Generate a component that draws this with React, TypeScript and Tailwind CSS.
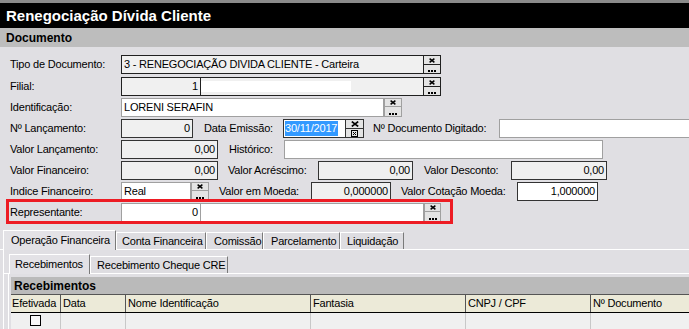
import React from "react";

const XIcon = () => (
  <svg width="6" height="5" viewBox="0 0 6 5">
    <path d="M0.6 0.6 L5.4 4.4 M5.4 0.6 L0.6 4.4" stroke="#000" strokeWidth="1.5" />
  </svg>
);

const Dots = () => (
  <svg width="8" height="2" viewBox="0 0 8 2" shapeRendering="crispEdges">
    <rect x="0" y="0" width="2" height="2" fill="#000" />
    <rect x="3" y="0" width="2" height="2" fill="#000" />
    <rect x="6" y="0" width="2" height="2" fill="#000" />
  </svg>
);

const BigX = () => (
  <svg width="8" height="6" viewBox="0 0 8 6">
    <path d="M0.8 0.6 L7.2 5.4 M7.2 0.6 L0.8 5.4" stroke="#000" strokeWidth="1.7" />
  </svg>
);

const CalIcon = () => (
  <svg width="7" height="7" viewBox="0 0 7 7" shapeRendering="crispEdges">
    <rect x="0.5" y="0.5" width="6" height="6" fill="none" stroke="#000" strokeWidth="1" />
    <rect x="2" y="2" width="1" height="1" fill="#000" />
    <rect x="4" y="2" width="1" height="1" fill="#000" />
    <rect x="3" y="3" width="1" height="1" fill="#000" />
    <rect x="2" y="4" width="1" height="1" fill="#000" />
    <rect x="4" y="4" width="1" height="1" fill="#000" />
  </svg>
);

function DarkBtns() {
  return (
    <div className="w-[17px] h-full flex flex-col border-l border-[#202020] shrink-0">
      <div className="h-[9px] bg-[#e4e4e4] flex items-center justify-center border-b border-[#202020]">
        <XIcon />
      </div>
      <div className="flex-1 bg-[#e4e4e4] flex items-end justify-center pb-[1px]">
        <Dots />
      </div>
    </div>
  );
}

function LightBtns({ w }: { w: string }) {
  return (
    <div className={`${w} h-full flex flex-col border border-[#a0a0a0] shrink-0 bg-[#e4e4e4]`}>
      <div className="h-[8px] flex items-center justify-center border-b border-[#a0a0a0]">
        <XIcon />
      </div>
      <div className="flex-1 flex items-end justify-center pb-[1px]">
        <Dots />
      </div>
    </div>
  );
}

function Label({ children }: { children: React.ReactNode }) {
  return <div className="w-[121px] pl-[10px] shrink-0 whitespace-nowrap">{children}</div>;
}

const grayField =
  "h-full bg-[#f0f0f0] border border-[#333] flex items-center justify-end pr-[2px] shrink-0";
const whiteField = "h-full bg-white border border-[#a0a0a0] flex items-center shrink-0";

function Tab({ children, w, pl, active }: { children: React.ReactNode; w: string; pl: string; active?: boolean }) {
  return (
    <div
      className={`${w} ${pl} ${
        active ? "h-[19px] bg-[#e3e2e6] relative -mb-[1px] h-[20px]" : "h-[17px] bg-[#dedde1]"
      } border-l border-t border-white border-r border-r-[#7a7a7a] flex items-center shrink-0 whitespace-nowrap`}
    >
      {children}
    </div>
  );
}

export default function App() {
  return (
    <div className="w-[689px] h-[329px] overflow-hidden bg-[#e0dfe3] text-black text-[11px] tracking-[-0.2px] font-['Liberation_Sans',Arial,sans-serif] leading-none">
      {/* Title */}
      <div className="h-[28px] border-t-[3px] border-[#8a8a8a] bg-black text-white font-bold text-[15px] tracking-normal pl-[6px] flex items-center">
        Renegociação Dívida Cliente
      </div>
      <div className="h-[19px] bg-[#bdbdbd] font-bold text-[12px] tracking-normal pl-[6px] flex items-center">
        Documento
      </div>

      {/* Form */}
      <div className="relative flex flex-col pt-[8px]">
        {/* Tipo de Documento */}
        <div className="flex items-center h-[19px]">
          <Label>Tipo de Documento:</Label>
          <div className="w-[320px] h-full border border-[#202020] flex shrink-0">
            <div className="flex-1 bg-[#f0f0f0] flex items-center pl-[2px] whitespace-nowrap">
              3 - RENEGOCIAÇÃO DIVIDA CLIENTE - Carteira
            </div>
            <DarkBtns />
          </div>
        </div>

        {/* Filial */}
        <div className="flex items-center h-[19px] mt-[3px]">
          <Label>Filial:</Label>
          <div className="w-[320px] h-full border border-[#202020] flex shrink-0">
            <div className="w-[79px] bg-[#f0f0f0] flex items-center justify-end pr-[2px] border-r border-[#202020]">1</div>
            <div className="flex-1 bg-[#f0f0f0] flex items-center">
              <div className="w-[150px] h-[11px] bg-white"></div>
            </div>
            <DarkBtns />
          </div>
        </div>

        {/* Identificação */}
        <div className="flex items-center h-[19px] mt-[2px]">
          <Label>Identificação:</Label>
          <div className={`${whiteField} w-[263px] pl-[2px]`}>LORENI SERAFIN</div>
          <LightBtns w="w-[18px]" />
        </div>

        {/* Nº Lançamento */}
        <div className="flex items-center h-[19px] mt-[2px]">
          <Label>Nº Lançamento:</Label>
          <div className={`${grayField} w-[72px]`}>0</div>
          <div className="ml-[11px] w-[79px] shrink-0 whitespace-nowrap">Data Emissão:</div>
          <div className="w-[63px] h-full bg-white border border-[#333] flex items-center pl-[1px] py-[1px] shrink-0">
            <div className="h-full bg-[#3399ff] text-white flex items-center pr-[1px]">30/11/2017</div>
          </div>
          <div className="w-[18px] h-full border border-[#333] border-l-0 flex flex-col bg-[#e4e4e4] shrink-0">
            <div className="h-[9px] flex items-center justify-center border-b border-[#333]">
              <BigX />
            </div>
            <div className="flex-1 flex items-center justify-center">
              <CalIcon />
            </div>
          </div>
          <div className="ml-[9px] w-[126px] shrink-0 whitespace-nowrap">Nº Documento Digitado:</div>
          <div className={`${whiteField} w-[200px]`}></div>
        </div>

        {/* Valor Lançamento */}
        <div className="flex items-center h-[19px] mt-[2px]">
          <Label>Valor Lançamento:</Label>
          <div className={`${grayField} w-[97px]`}>0,00</div>
          <div className="ml-[11px] w-[55px] shrink-0 whitespace-nowrap">Histórico:</div>
          <div className={`${whiteField} w-[319px]`}></div>
        </div>

        {/* Valor Financeiro */}
        <div className="flex items-center h-[19px] mt-[2px]">
          <Label>Valor Financeiro:</Label>
          <div className={`${grayField} w-[97px]`}>0,00</div>
          <div className="ml-[10px] w-[90px] shrink-0 whitespace-nowrap">Valor Acréscimo:</div>
          <div className={`${grayField} w-[95px]`}>0,00</div>
          <div className="ml-[11px] w-[87px] shrink-0 whitespace-nowrap">Valor Desconto:</div>
          <div className={`${grayField} w-[96px]`}>0,00</div>
        </div>

        {/* Indice Financeiro */}
        <div className="flex items-center h-[19px] mt-[2px]">
          <Label>Indice Financeiro:</Label>
          <div className={`${whiteField} w-[70px] pl-[2px]`}>Real</div>
          <LightBtns w="w-[18px]" />
          <div className="ml-[10px] w-[92px] shrink-0 whitespace-nowrap">Valor em Moeda:</div>
          <div className={`${grayField} w-[80px]`}>0,000000</div>
          <div className="ml-[10px] w-[116px] shrink-0 whitespace-nowrap">Valor Cotação Moeda:</div>
          <div className="h-full bg-white border border-[#333] flex items-center justify-end pr-[2px] shrink-0 w-[81px]">
            1,000000
          </div>
        </div>

        {/* Representante */}
        <div className="flex items-center h-[19px] mt-[2px]">
          <Label>Representante:</Label>
          <div className={`${whiteField} w-[80px] justify-end pr-[2px]`}>0</div>
          <div className={`${whiteField} w-[223px] border-l-0`}></div>
          <LightBtns w="w-[17px]" />
        </div>

        {/* Red highlight annotation */}
        <div className="absolute left-[6px] top-[152px] w-[447px] h-[25px] border-[3px] border-[#ed1c24] pointer-events-none"></div>
      </div>

      {/* Tabs */}
      <div className="mt-[8px] flex items-end h-[20px] border-b border-white pl-[3px]">
        <Tab w="w-[113px]" pl="pl-[7px]" active>Operação Financeira</Tab>
        <Tab w="w-[90px]" pl="pl-[5px]">Conta Financeira</Tab>
        <Tab w="w-[57px]" pl="pl-[7px]">Comissão</Tab>
        <Tab w="w-[77px]" pl="pl-[7px]">Parcelamento</Tab>
        <Tab w="w-[64px]" pl="pl-[6px]">Liquidação</Tab>
      </div>

      <div className="ml-[3px] border-l border-white h-[100px] pt-[4px]">
        <div className="flex items-end h-[20px] border-b border-white pl-[5px]">
          <Tab w="w-[81px]" pl="pl-[5px]" active>Recebimentos</Tab>
          <Tab w="w-[138px]" pl="pl-[6px]">Recebimento Cheque CRE</Tab>
        </div>
        <div className="ml-[4px] border-l border-white pt-[3px] pl-[2px]">
          <div className="h-[17px] bg-[#bababa] font-bold text-[12px] tracking-normal pl-[3px] flex items-center">
            Recebimentos
          </div>
          <div className="flex h-[19px] bg-[#ecead8] border-t border-[#555] border-b border-b-black">
            <div className="w-[50px] border-r border-[#555] flex items-center pl-[1px] shrink-0">Efetivada</div>
            <div className="w-[65px] border-r border-[#555] flex items-center pl-[2px] shrink-0">Data</div>
            <div className="w-[185px] border-r border-[#555] flex items-center pl-[2px] shrink-0">Nome Identificação</div>
            <div className="w-[155px] border-r border-[#555] flex items-center pl-[2px] shrink-0">Fantasia</div>
            <div className="w-[125px] border-r border-[#555] flex items-center pl-[2px] shrink-0">CNPJ / CPF</div>
            <div className="w-[120px] flex items-center pl-[2px] shrink-0">Nº Documento</div>
          </div>
          <div className="flex h-[20px] bg-[#f0f0f0]">
            <div className="w-[50px] border-r border-[#c8c8c8] flex items-start justify-center pt-[2px] shrink-0">
              <div className="w-[11px] h-[11px] border border-black bg-[#f8f8f8]"></div>
            </div>
            <div className="w-[65px] border-r border-[#c8c8c8] shrink-0"></div>
            <div className="w-[185px] border-r border-[#c8c8c8] shrink-0"></div>
            <div className="w-[155px] border-r border-[#c8c8c8] shrink-0"></div>
            <div className="w-[125px] border-r border-[#c8c8c8] shrink-0"></div>
            <div className="w-[120px] shrink-0"></div>
          </div>
        </div>
      </div>
    </div>
  );
}
